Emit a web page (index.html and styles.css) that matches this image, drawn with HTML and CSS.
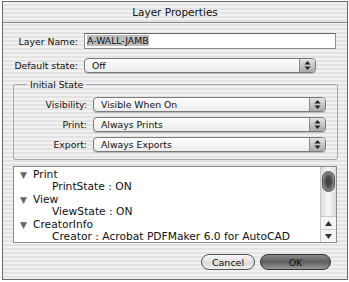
FILE: index.html
```html
<!DOCTYPE html>
<html lang="en">
<head>
  <meta charset="UTF-8">
  <title>Layer Properties</title>
  <link rel="stylesheet" href="styles.css">
</head>
<body>
  <div class="window">
    <div class="titlebar">Layer Properties</div>

    <div class="body">
      <div class="row row-name">
        <span class="label">Layer Name:</span>
        <div class="textfield"><span class="selected">A-WALL-JAMB</span></div>
      </div>

      <div class="row row-default">
        <span class="label">Default state:</span>
        <div class="popup popup-short">
          <span>Off</span>
          <span class="arrows"><svg width="7" height="9" viewBox="0 0 7 9"><path d="M3.5 0 L6.5 3.5 L0.5 3.5 Z M3.5 9 L6.5 5.5 L0.5 5.5 Z" fill="#222"/></svg></span>
        </div>
      </div>

      <!-- Initial State group -->
      <fieldset class="group">
        <legend>Initial State</legend>
        <div class="group-rows">
          <div class="row">
            <span class="label">Visibility:</span>
            <div class="popup">
              <span>Visible When On</span>
              <span class="arrows"><svg width="7" height="9" viewBox="0 0 7 9"><path d="M3.5 0 L6.5 3.5 L0.5 3.5 Z M3.5 9 L6.5 5.5 L0.5 5.5 Z" fill="#222"/></svg></span>
            </div>
          </div>
          <div class="row">
            <span class="label">Print:</span>
            <div class="popup">
              <span>Always Prints</span>
              <span class="arrows"><svg width="7" height="9" viewBox="0 0 7 9"><path d="M3.5 0 L6.5 3.5 L0.5 3.5 Z M3.5 9 L6.5 5.5 L0.5 5.5 Z" fill="#222"/></svg></span>
            </div>
          </div>
          <div class="row">
            <span class="label">Export:</span>
            <div class="popup">
              <span>Always Exports</span>
              <span class="arrows"><svg width="7" height="9" viewBox="0 0 7 9"><path d="M3.5 0 L6.5 3.5 L0.5 3.5 Z M3.5 9 L6.5 5.5 L0.5 5.5 Z" fill="#222"/></svg></span>
            </div>
          </div>
        </div>
      </fieldset>

      <!-- Properties list -->
      <div class="listbox">
        <div class="list">
          <div class="item"><span class="tri">&#9660;</span>Print</div>
          <div class="item sub">PrintState : ON</div>
          <div class="item"><span class="tri">&#9660;</span>View</div>
          <div class="item sub">ViewState : ON</div>
          <div class="item"><span class="tri">&#9660;</span>CreatorInfo</div>
          <div class="item sub">Creator : Acrobat PDFMaker 6.0 for AutoCAD</div>
        </div>
        <div class="scrollbar">
          <div class="track"><div class="thumb"></div></div>
          <div class="sbtn"><svg width="7" height="5" viewBox="0 0 7 5"><path d="M3.5 0 L7 5 L0 5 Z" fill="#333"/></svg></div>
          <div class="sbtn"><svg width="7" height="5" viewBox="0 0 7 5"><path d="M0 0 L7 0 L3.5 5 Z" fill="#333"/></svg></div>
        </div>
      </div>

      <div class="buttons">
        <button class="btn">Cancel</button>
        <button class="btn default">OK</button>
      </div>
    </div>
  </div>
</body>
</html>
```

FILE: styles.css
```css
body {
  margin: 0;
  background: #fff;
  font-family: "DejaVu Sans", Verdana, sans-serif;
  font-size: 9.3px;
  color: #111;
}
.window {
  margin: 1px 0 0 2px;
  width: 344px;
  height: 277px;
  border: 1px solid #6a6a6a;
  background: repeating-linear-gradient(#f1f1f1 0, #f1f1f1 2px, #e3e3e3 2px, #e3e3e3 4px);
  display: flex;
  flex-direction: column;
}
.titlebar {
  height: 20px;
  line-height: 21px;
  text-align: center;
  font-size: 10.5px;
  border-bottom: 1px solid #8a8a8a;
}
.body {
  padding: 10px 10px 0 10px;
  display: flex;
  flex-direction: column;
}
.row {
  display: flex;
  align-items: center;
  gap: 6px;
  height: 15px;
}
.row-name {
  height: 16px;
}
.label {
  text-align: right;
  flex: none;
  white-space: nowrap;
}
.row-name .label,
.row-default .label {
  width: 65px;
}
.row-default {
  margin-top: 9px;
}
.textfield {
  width: 248px;
  height: 14px;
  border: 1px solid #8e8e8e;
  border-top-color: #666;
  background: #fff;
  padding-left: 2px;
  line-height: 14px;
}
.selected {
  background: #bdbdbd;
}
.popup {
  width: 224px;
  height: 13px;
  border: 1px solid #7a7a7a;
  border-radius: 4px;
  background: linear-gradient(#fdfdfd, #ececec);
  box-shadow: 0 1px 0 #bbb;
  line-height: 13px;
  padding-left: 7px;
  display: flex;
  justify-content: space-between;
}
.popup-short {
  width: 223px;
}
.arrows {
  width: 15px;
  height: 13px;
  border-left: 1px solid #8a8a8a;
  border-radius: 0 3px 3px 0;
  background: linear-gradient(#e4e4e4, #a9a9a9);
  display: flex;
  align-items: center;
  justify-content: center;
}
.group {
  margin: 6px 0 0 0;
  width: 324px;
  box-sizing: border-box;
  border: 1px solid #a8a8a8;
  border-radius: 2px;
  padding: 7px 11px 7px 0;
}
.group legend {
  margin-left: 13px;
  padding: 0 3px;
  line-height: 11px;
}
.group-rows {
  display: flex;
  flex-direction: column;
  gap: 5px;
}
.group .label {
  width: 73px;
}
.listbox {
  margin-top: 6px;
  width: 324px;
  height: 77px;
  box-sizing: border-box;
  border: 1px solid #8c8c8c;
  background: #fff;
  display: flex;
}
.list {
  flex: 1;
  padding: 2px 0 0 6px;
  font-size: 10.7px;
}
.item {
  height: 12.4px;
  line-height: 12.4px;
  white-space: nowrap;
}
.tri {
  display: inline-block;
  width: 13px;
  font-size: 9px;
  color: #666;
}
.sub {
  padding-left: 32px;
}
.scrollbar {
  width: 15px;
  border-left: 1px solid #c8c8c8;
  display: flex;
  flex-direction: column;
  background: #f4f4f4;
}
.track {
  flex: 1;
  padding: 4px 1px 0 1px;
  background: linear-gradient(90deg, #dcdcdc, #f8f8f8 50%, #dcdcdc);
}
.thumb {
  height: 19px;
  border-radius: 7px;
  border: 1px solid #555;
  background: radial-gradient(ellipse at center, #444 30%, #888 70%, #bbb);
}
.sbtn {
  height: 12px;
  display: flex;
  align-items: center;
  justify-content: center;
  border-top: 1px solid #ccc;
}
.buttons {
  display: flex;
  justify-content: flex-end;
  gap: 5px;
  margin-top: 11px;
  padding-right: 6px;
}
.btn {
  font-family: inherit;
  font-size: 9.5px;
  height: 16px;
  padding: 0;
  border: 1px solid #555;
  border-radius: 8px;
  background: linear-gradient(#f6f6f6, #dcdcdc 60%, #f0f0f0);
  color: #111;
  width: 54px;
}
.btn.default {
  width: 71px;
  background: linear-gradient(#8a8a8a, #5e5e5e 50%, #9a9a9a);
  border-color: #333;
}
```
